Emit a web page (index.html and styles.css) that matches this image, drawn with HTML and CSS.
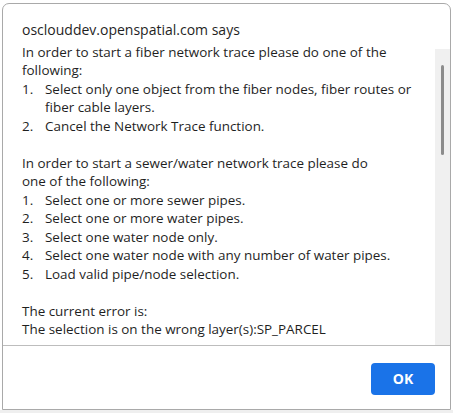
FILE: index.html
```html
<!DOCTYPE html>
<html>
<head>
<meta charset="utf-8">
<link rel="stylesheet" href="styles.css">
</head>
<body>
<div class="stage">
  <div class="dialog">
    <div class="title">osclouddev.openspatial.com says</div>
    <div class="body-row">
      <div class="message">
        <div class="line">In order to start a fiber network trace please do one of the</div>
        <div class="line">following:</div>
        <div class="item"><span class="num">1.</span><span>Select only one object from the fiber nodes, fiber routes or</span></div>
        <div class="item"><span class="num"></span><span>fiber cable layers.</span></div>
        <div class="item"><span class="num">2.</span><span>Cancel the Network Trace function.</span></div>
        <div class="line blank"></div>
        <div class="line">In order to start a sewer/water network trace please do</div>
        <div class="line">one of the following:</div>
        <div class="item"><span class="num">1.</span><span>Select one or more sewer pipes.</span></div>
        <div class="item"><span class="num">2.</span><span>Select one or more water pipes.</span></div>
        <div class="item"><span class="num">3.</span><span>Select one water node only.</span></div>
        <div class="item"><span class="num">4.</span><span>Select one water node with any number of water pipes.</span></div>
        <div class="item"><span class="num">5.</span><span>Load valid pipe/node selection.</span></div>
        <div class="line blank"></div>
        <div class="line">The current error is:</div>
        <div class="line">The selection is on the wrong layer(s):SP_PARCEL</div>
      </div>
      <div class="track"><div class="thumb"></div></div>
    </div>
    <div class="footer">
      <button class="ok">OK</button>
    </div>
  </div>
  <div class="under"></div>
</div>
</body>
</html>
```
FILE: styles.css
```css
html, body {
  margin: 0;
  padding: 0;
  background: #ffffff;
}
.stage {
  width: 453px;
  height: 413px;
  display: flex;
  flex-direction: column;
  padding: 3px 2px 0 2px;
  box-sizing: border-box;
}
.dialog {
  width: 449px;
  height: 407px;
  flex: none;
  box-sizing: border-box;
  border: 1px solid #a9a9a9;
  border-radius: 7px 7px 0 0;
  background: #ffffff;
  display: flex;
  flex-direction: column;
  font-family: "Open Sans", "Noto Sans", sans-serif;
  color: #1f1f1f;
}
.under {
  flex: 1;
  margin: 0 -2px;
  background: #efefef;
}
.title {
  font-size: 14px;
  line-height: 20px;
  padding: 15.6px 0 0 19px;
  height: 23.2px;
  flex: none;
  white-space: nowrap;
}
.body-row {
  display: flex;
  height: 302.2px;
  flex: none;
}
.message {
  flex: 1;
  overflow: hidden;
  padding-left: 19px;
  font-size: 13.45px;
  line-height: 18.5px;
  white-space: nowrap;
}
.line {
  height: 18.5px;
}
.item {
  display: flex;
  height: 18.5px;
}
.num {
  width: 23px;
  flex: none;
}
.track {
  width: 15px;
  flex: none;
  margin-top: 6.2px;
  background: #f0f0f0;
  display: flex;
  justify-content: center;
  padding-top: 16px;
  box-sizing: border-box;
}
.thumb {
  width: 3px;
  height: 90px;
  background: #8c8c8c;
  border-radius: 2px;
}
.footer {
  flex: 1;
  border-top: 1px solid #bdbdbd;
  display: flex;
  justify-content: flex-end;
  align-items: flex-start;
  padding: 17px 15px 0 0;
}
.ok {
  width: 64px;
  height: 32px;
  border: none;
  border-radius: 4px;
  background: #1a73e8;
  color: #ffffff;
  font-family: "Open Sans", "Noto Sans", sans-serif;
  font-weight: 700;
  font-size: 14px;
  padding: 0;
}
```
